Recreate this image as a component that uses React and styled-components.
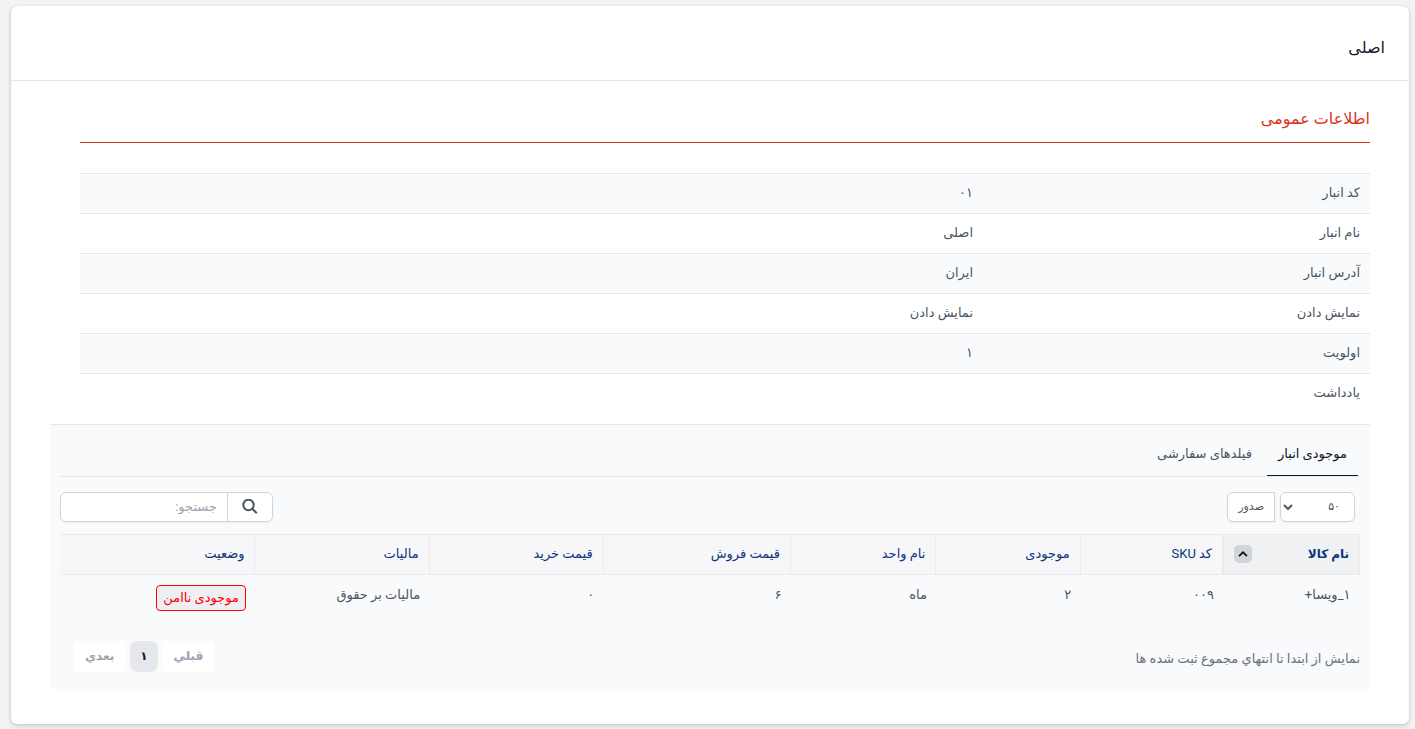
import React, { useState } from 'react';
import styled, { createGlobalStyle } from 'styled-components';

const GlobalStyle = createGlobalStyle`
  *, *::before, *::after {
    box-sizing: border-box;
  }
  body {
    margin: 0;
    background: #f3f3f3;
    color: #4b5563;
    font-family: Roboto, "DejaVu Sans", sans-serif;
    font-size: 13px;
    line-height: 20px;
  }
  button, input, select {
    font: inherit;
    color: inherit;
    margin: 0;
  }
`

const details = [
  ['کد انبار', '۰۱'],
  ['نام انبار', 'اصلی'],
  ['آدرس انبار', 'ایران'],
  ['نمایش دادن', 'نمایش دادن'],
  ['اولویت', '۱'],
  ['یادداشت', ''],
];

const columns = [
  { title: 'نام کالا', width: '10.5%', sorted: true },
  { title: 'کد SKU', width: '11%' },
  { title: 'موجودی', width: '11.1%' },
  { title: 'نام واحد', width: '11.2%' },
  { title: 'قیمت فروش', width: '14.4%' },
  { title: 'قیمت خرید', width: '13.4%' },
  { title: 'مالیات', width: '13.4%' },
  { title: 'وضعیت', width: '15%' },
];

const rows = [
  ['۱_ویسا+', '۰۰۹', '۲', 'ماه', '۶', '۰', 'مالیات بر حقوق'],
];

function App() {
  const [tab, setTab] = useState('stock');

  return (
    <Page dir="rtl" lang="fa">
      <GlobalStyle />
      <Card>
        <CardHeader>
          <Title>اصلی</Title>
        </CardHeader>
        <CardBody>
          <Section>
            <SectionTitle>اطلاعات عمومی</SectionTitle>
            <DetailTable>
              <tbody>
                {details.map(([label, value]) => (
                  <tr key={label}>
                    <th scope="row">{label}</th>
                    <td>{value}</td>
                  </tr>
                ))}
              </tbody>
            </DetailTable>
          </Section>
          <Panel>
            <Tabs role="tablist">
              <Tab role="tab" aria-selected={tab === 'stock'} $active={tab === 'stock'} onClick={() => setTab('stock')}>
                موجودی انبار
              </Tab>
              <Tab role="tab" aria-selected={tab === 'fields'} $active={tab === 'fields'} onClick={() => setTab('fields')}>
                فیلدهای سفارشی
              </Tab>
            </Tabs>
            <Toolbar>
              <Tools>
                <PageSize aria-label="تعداد" defaultValue="50">
                  <option value="25">۲۵</option>
                  <option value="50">۵۰</option>
                  <option value="100">۱۰۰</option>
                </PageSize>
                <ExportButton>صدور</ExportButton>
              </Tools>
              <Search>
                <SearchButton aria-label="جستجو">
                  <svg width="16" height="16" viewBox="0 0 16 16" fill="none" stroke="currentColor" strokeWidth="2">
                    <circle cx="6.5" cy="6" r="5.2" />
                    <path d="M10.3 9.8L14.8 14.3" />
                  </svg>
                </SearchButton>
                <SearchInput type="search" aria-label="جستجو" placeholder="جستجو:" />
              </Search>
            </Toolbar>
            <StockTable>
              <colgroup>
                {columns.map(c => <Col key={c.title} $width={c.width} />)}
              </colgroup>
              <thead>
                <tr>
                  {columns.map(c => (
                    <HeadCell key={c.title} $sorted={c.sorted}>
                      <HeadInner>
                        {c.title}
                        {c.sorted && (
                          <SortMark>
                            <svg width="10" height="6" viewBox="0 0 10 6" fill="none" stroke="currentColor" strokeWidth="1.7">
                              <path d="M1 5.2L5 1.3L9 5.2" />
                            </svg>
                          </SortMark>
                        )}
                      </HeadInner>
                    </HeadCell>
                  ))}
                </tr>
              </thead>
              <tbody>
                {rows.map(row => (
                  <tr key={row[0]}>
                    {row.map((cell, i) => <Cell key={i}>{cell}</Cell>)}
                    <Cell><Badge>موجودی ناامن</Badge></Cell>
                  </tr>
                ))}
              </tbody>
            </StockTable>
            <Footer>
              <Info>نمایش از ابتدا تا انتهاي مجموع ثبت شده ها</Info>
              <Pagination>
                <PageButton disabled>قبلي</PageButton>
                <PageButton $current>۱</PageButton>
                <PageButton disabled>بعدي</PageButton>
              </Pagination>
            </Footer>
          </Panel>
        </CardBody>
      </Card>
    </Page>
  );
}

const Page = styled.div`
  padding: 6px 6px 5px 11px;
`

const Card = styled.div`
  background: #fff;
  border-radius: 6px;
  box-shadow: 0 0 1px rgba(0, 0, 0, 0.2), 0 2px 5px rgba(0, 0, 0, 0.17);
`

const CardHeader = styled.header`
  padding: 30px 24px 20px;
  border-bottom: 1px solid #e5e7eb;
`

const Title = styled.h1`
  margin: 0;
  color: #111827;
  font-size: 16px;
  font-weight: 400;
  line-height: 24px;
`

const CardBody = styled.div`
  padding: 24px 39px 35px;
`

const Section = styled.section`
  padding: 0 0 10px 30px;
`

const SectionTitle = styled.h2`
  margin: 0 0 30px;
  padding: 2px 0 11px;
  border-bottom: 1px solid #dc3318;
  color: #dc3318;
  font-size: 16px;
  font-weight: 400;
  line-height: 24px;
`

const DetailTable = styled.table`
  width: 100%;
  table-layout: fixed;
  border-collapse: collapse;
  text-align: right;

  tr {
    border-top: 1px solid #e5e7eb;
  }
  tr:nth-child(odd) {
    background: #f9fafc;
  }
  th {
    width: 30%;
    font-weight: 400;
  }
  th, td {
    height: 40px;
    padding: 9px 10px 10px;
  }
`

const Panel = styled.section`
  padding: 10px 10px 17px;
  border-top: 1px solid #e5e7eb;
  background: #f9fafc;
`

const Tabs = styled.div`
  display: flex;
  gap: 4px;
  padding: 0 2px;
  border-bottom: 1px solid #e5e7eb;
`

const Tab = styled.button`
  height: 41px;
  padding: 0 11px 2px;
  border: 0;
  border-bottom: 1px solid ${props => props.$active ? '#111827' : 'transparent'};
  background: none;
  color: ${props => props.$active ? '#111827' : '#4b5563'};
  cursor: pointer;
`

const Toolbar = styled.div`
  display: flex;
  justify-content: space-between;
  padding: 15px 0 12px;
`

const Tools = styled.div`
  display: flex;
  gap: 5px;
  padding-right: 5px;
  font-size: 11px;
`

const PageSize = styled.select`
  width: 75px;
  height: 30px;
  padding: 0 10px 0 0;
  border: 1px solid #d1d5db;
  border-radius: 6px;
  background-color: #fff;
  box-shadow: 0 1px 2px rgba(0, 0, 0, 0.05);
`

const ExportButton = styled.button`
  height: 30px;
  padding: 0 10px;
  border: 1px solid #d1d5db;
  border-radius: 6px 0 0 6px;
  background: #fff;
  box-shadow: 0 1px 2px rgba(0, 0, 0, 0.05);
`

const Search = styled.div`
  display: flex;
  width: 213px;
  height: 30px;
  border: 1px solid #d1d5db;
  border-radius: 6px;
  background: #fff;
  box-shadow: 0 1px 2px rgba(0, 0, 0, 0.05);
`

const SearchButton = styled.button`
  display: flex;
  align-items: center;
  justify-content: center;
  width: 45px;
  padding: 0;
  border: 0;
  border-left: 1px solid #d1d5db;
  background: none;
`

const SearchInput = styled.input`
  flex: 1;
  min-width: 0;
  padding: 0 10px;
  border: 0;
  background: none;

  &::placeholder {
    color: #9ca3af;
  }
`

const StockTable = styled.table`
  width: 100%;
  table-layout: fixed;
  border-collapse: collapse;
  text-align: right;
`

const Col = styled.col`
  width: ${props => props.$width};
`

const HeadCell = styled.th`
  height: 40px;
  padding: 0 10px;
  border: 1px solid #ebebed;
  border-left-width: ${props => props.$sorted ? '2px' : '1px'};
  background: ${props => props.$sorted ? '#eff1f3' : '#f7f7f9'};
  color: #0a3580;
  font-size: ${props => props.$sorted ? '12px' : '13px'};
  font-weight: ${props => props.$sorted ? 700 : 400};

  &:last-child {
    border-left: 0;
  }
`

const HeadInner = styled.div`
  display: flex;
  align-items: center;
  justify-content: space-between;
`

const SortMark = styled.span`
  display: flex;
  align-items: center;
  justify-content: center;
  width: 18px;
  height: 18px;
  border-radius: 5px;
  background: #d1d5db;
  color: #111;
`

const Cell = styled.td`
  height: 46px;
  padding: 10px 9px;
  vertical-align: top;
`

const Badge = styled.span`
  display: block;
  width: fit-content;
  padding: 2px 6px;
  border: 1px solid #f00;
  border-radius: 4px;
  background: #eeeff3;
  color: #f00;
`

const Footer = styled.div`
  display: flex;
  align-items: flex-start;
  justify-content: space-between;
  padding-top: 20px;
`

const Info = styled.div`
  padding-top: 8px;
  color: #6b7280;
`

const Pagination = styled.nav`
  display: flex;
  gap: 5px;
  padding-left: 14px;
  font-size: 12px;
`

const PageButton = styled.button`
  height: 31px;
  padding: 0 ${props => props.$current ? '10px' : '11px'};
  border: 0;
  border-radius: ${props => props.$current ? '8px' : '4px'};
  background: ${props => props.$current ? '#e5e7eb' : '#fff'};
  color: ${props => props.$current ? '#111827' : '#9ca3af'};
  font-weight: 700;
`

export default App;
